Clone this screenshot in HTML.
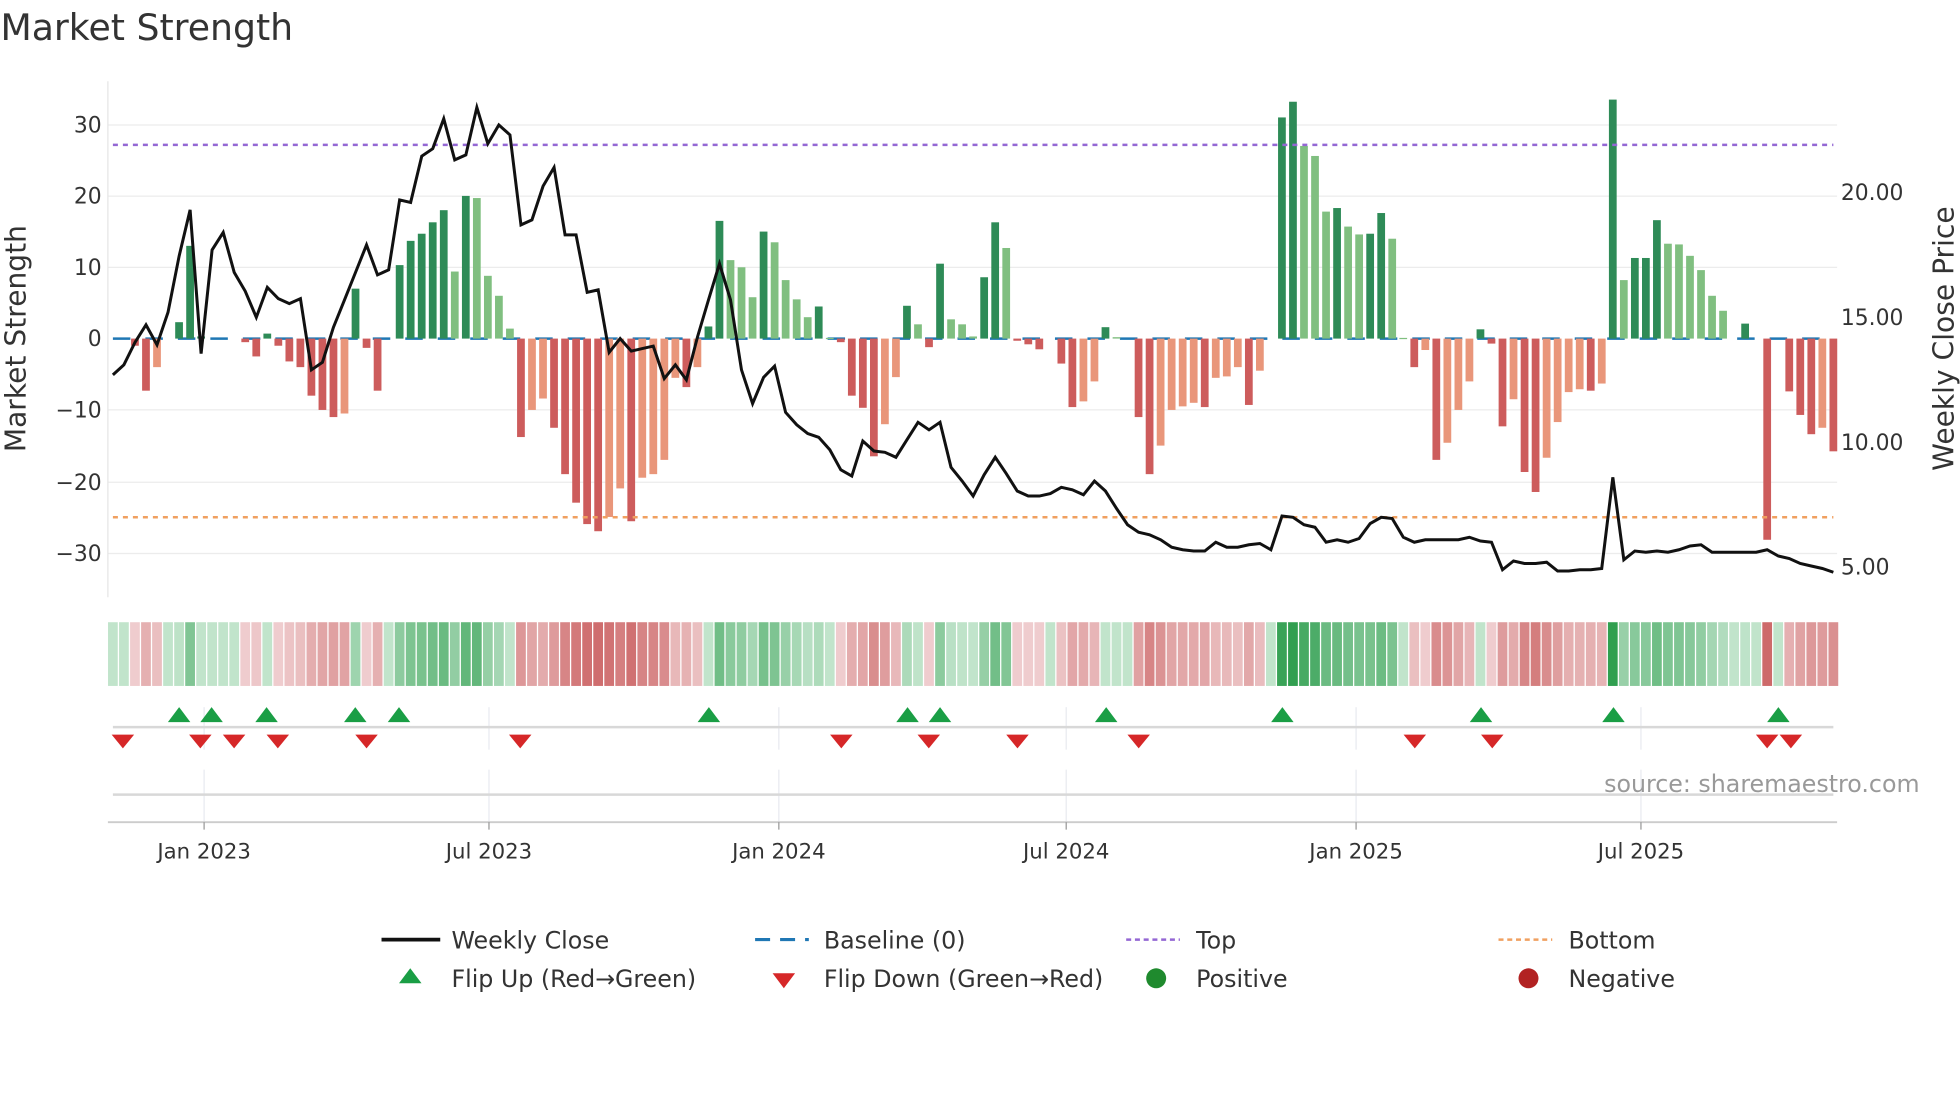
<!DOCTYPE html>
<html><head><meta charset="utf-8">
<style>
html,body{margin:0;padding:0;background:#fff;width:1960px;height:1102px;overflow:hidden}
svg{display:block}
text{font-family:"DejaVu Sans","Liberation Sans",sans-serif;fill:#333}
</style></head>
<body>
<svg id="s" width="1960" height="1102" viewBox="0 0 1568 882" xmlns="http://www.w3.org/2000/svg">
<text x="0" y="32" font-size="29">Market Strength</text>
<g id="grid" stroke="#ececec" stroke-width="1">
<line x1="86" x2="1470" y1="100" y2="100"/><line x1="86" x2="1470" y1="157" y2="157"/>
<line x1="86" x2="1470" y1="214" y2="214"/><line x1="86" x2="1470" y1="328" y2="328"/>
<line x1="86" x2="1470" y1="386" y2="386"/><line x1="86" x2="1470" y1="443" y2="443"/>
</g>
<line x1="86" x2="86" y1="65" y2="478" stroke="#e6e6e6"/>
<line x1="90" x2="1467" y1="271" y2="271" stroke="#1f77b4" stroke-width="2" stroke-dasharray="14 12"/>
<g id="bars"></g>
<line x1="90" x2="1467" y1="116" y2="116" stroke="#9467d4" stroke-width="2" stroke-dasharray="4 4"/>
<line x1="90" x2="1467" y1="414" y2="414" stroke="#f0a060" stroke-width="2" stroke-dasharray="4 4"/>
<polyline id="price" fill="none" stroke="#111" stroke-width="2.4" stroke-linejoin="miter"/>
<g font-size="17.5" text-anchor="end">
<text x="81" y="106">30</text><text x="81" y="163">20</text><text x="81" y="220">10</text>
<text x="81" y="277">0</text><text x="81" y="334">−10</text><text x="81" y="392">−20</text><text x="81" y="449">−30</text>
</g>
<g font-size="17.5">
<text x="1473" y="160">20.00</text><text x="1473" y="260">15.00</text>
<text x="1473" y="360">10.00</text><text x="1473" y="460">5.00</text>
</g>
<text transform="translate(20,271) rotate(-90)" font-size="22.5" text-anchor="middle">Market Strength</text>
<text transform="translate(1563,271) rotate(-90)" font-size="22.5" text-anchor="middle">Weekly Close Price</text>
<g id="heat"></g>
<g stroke="#e8eaf0" stroke-width="1">
<line x1="163" x2="163" y1="566" y2="600"/><line x1="391" x2="391" y1="566" y2="600"/>
<line x1="623" x2="623" y1="566" y2="600"/><line x1="853" x2="853" y1="566" y2="600"/>
<line x1="1085" x2="1085" y1="566" y2="600"/><line x1="1313" x2="1313" y1="566" y2="600"/>
<line x1="163" x2="163" y1="616" y2="658"/><line x1="391" x2="391" y1="616" y2="658"/>
<line x1="623" x2="623" y1="616" y2="658"/><line x1="853" x2="853" y1="616" y2="658"/>
<line x1="1085" x2="1085" y1="616" y2="658"/><line x1="1313" x2="1313" y1="616" y2="658"/>
</g>
<line x1="90" x2="1467" y1="582" y2="582" stroke="#d8d8d8" stroke-width="2"/>
<line x1="90" x2="1467" y1="636" y2="636" stroke="#d8d8d8" stroke-width="2"/>
<g id="marks"></g>
<text x="1536" y="634" font-size="19" text-anchor="end" style="fill:#999">source: sharemaestro.com</text>
<line x1="86" x2="1470" y1="658" y2="658" stroke="#ccc" stroke-width="1.5"/>
<g stroke="#999"><line x1="163" x2="163" y1="658" y2="664"/><line x1="391" x2="391" y1="658" y2="664"/><line x1="623" x2="623" y1="658" y2="664"/><line x1="853" x2="853" y1="658" y2="664"/><line x1="1085" x2="1085" y1="658" y2="664"/><line x1="1313" x2="1313" y1="658" y2="664"/></g>
<g font-size="17" text-anchor="middle">
<text x="163" y="687">Jan 2023</text><text x="391" y="687">Jul 2023</text><text x="623" y="687">Jan 2024</text>
<text x="853" y="687">Jul 2024</text><text x="1085" y="687">Jan 2025</text><text x="1313" y="687">Jul 2025</text>
</g>
<g font-size="19">
<line x1="305" x2="352" y1="752" y2="752" stroke="#111" stroke-width="3"/>
<text x="361" y="759">Weekly Close</text>
<line x1="604" x2="647" y1="752" y2="752" stroke="#1f77b4" stroke-width="2.5" stroke-dasharray="12 8"/>
<text x="659" y="759">Baseline (0)</text>
<line x1="901" x2="944" y1="752" y2="752" stroke="#9467d4" stroke-width="2" stroke-dasharray="4 3"/>
<text x="957" y="759">Top</text>
<line x1="1199" x2="1242" y1="752" y2="752" stroke="#f0a060" stroke-width="2" stroke-dasharray="4 3"/>
<text x="1255" y="759">Bottom</text>
<polygon points="328,775 337,787 319,787" fill="#1a9e45"/>
<text x="361" y="790">Flip Up (Red→Green)</text>
<polygon points="618,779 636,779 627,791" fill="#d62728"/>
<text x="659" y="790">Flip Down (Green→Red)</text>
<circle cx="925" cy="783" r="8" fill="#1f8a2e"/>
<text x="957" y="790">Positive</text>
<circle cx="1223" cy="783" r="8" fill="#b22222"/>
<text x="1255" y="790">Negative</text>
</g>
</svg>
<script>
var V="0 x,0 x,-1 R,-7.3 R,-4 O,0 x,2.3 G,13 G,0.3 G,0 x,0 x,0 x,-0.5 R,-2.5 R,0.7 G,-1 R,-3.2 R,-4 R,-8 R,-10 R,-11 R,-10.5 O,7 G,-1.3 R,-7.3 R,0 x,10.3 G,13.7 G,14.7 G,16.3 G,18 G,9.4 g,20 G,19.7 g,8.8 g,6 g,1.4 g,-13.8 R,-10 O,-8.4 O,-12.5 R,-19 R,-23 R,-26 R,-27 R,-25 O,-21 O,-25.6 R,-19.5 O,-19 O,-17 O,-5.5 O,-6.8 R,-4 O,1.7 G,16.5 G,11 g,10 g,5.8 g,15 G,13.5 g,8.2 g,5.5 g,3 g,4.5 G,0.1 g,-0.5 R,-8 R,-9.7 R,-16.5 R,-12 O,-5.4 O,4.6 G,2 g,-1.2 R,10.5 G,2.7 g,2 g,0.3 g,8.6 G,16.3 G,12.7 g,-0.3 R,-0.8 R,-1.5 R,0 x,-3.5 R,-9.6 R,-8.8 O,-6 O,1.6 G,0.2 g,0 x,-11 R,-19 R,-15 O,-10 O,-9.5 O,-9 O,-9.6 R,-5.5 O,-5.3 O,-4 O,-9.3 R,-4.5 O,0 x,31 G,33.2 G,27 g,25.6 g,17.8 g,18.3 G,15.7 g,14.6 g,14.7 G,17.6 G,14 g,0.1 g,-4 R,-1.6 O,-17 R,-14.6 O,-10 O,-6 O,1.3 G,-0.7 R,-12.3 R,-8.5 O,-18.7 R,-21.5 R,-16.7 O,-11.7 O,-7.5 O,-7.1 O,-7.3 R,-6.3 O,33.5 G,8.2 g,11.3 G,11.3 G,16.6 G,13.3 g,13.2 g,11.6 g,9.6 g,6 g,3.9 g,0 x,2.1 G,0 x,-28.2 R,0 x,-7.4 R,-10.7 R,-13.4 R,-12.5 O,-15.8 R".split(",");
var P=[300,292,274,260,276,250,205,168,283,200,186,218,233,254,230,239,243,239,296,290,262,240,218,196,220,216,160,162,125,119,95,128,124,86,115,100,108,180,176,149,134,188,188,234,232,282,271,281,279,277,303,292,304,270,240,211,240,296,323,302,293,330,340,347,350,360,376,381,353,361,362,366,352,338,344,338,374,385,397,380,366,379,393,397,397,395,390,392,396,385,393,407,420,426,428,432,438,440,441,441,434,438,438,436,435,440,413,414,420,422,434,432,434,431,419,414,415,430,434,432,432,432,432,430,433,434,456,449,451,451,450,457,457,456,456,455,382,448,441,442,441,442,440,437,436,442,442,442,442,442,440,445,447,451,453,455,458];
var C={G:"#2e8b57",g:"#80bf80",R:"#cd5c5c",O:"#e9967a"};
var NS="http://www.w3.org/2000/svg";
function el(n,a,p){var e=document.createElementNS(NS,n);for(var k in a)e.setAttribute(k,a[k]);p.appendChild(e);return e;}
var bars=document.getElementById("bars"),heat=document.getElementById("heat");
var n=V.length,x0=90,dx=(1467-90)/(n-1);
function mix(a,b,t){var r=[];for(var i=0;i<3;i++)r.push(Math.round(a[i]+(b[i]-a[i])*t));return "rgb("+r.join(",")+")";}
var pts=[];
for(var i=0;i<n;i++){
 var p=V[i].split(" "),v=parseFloat(p[0]),c=p[1],x=x0+i*dx;
 if(c!="x"&&Math.abs(v)>0.05){var h=Math.abs(v)*5.71;el("rect",{x:x-3.1,y:v>0?271-h:271,width:6.2,height:Math.max(h,1),fill:C[c]},bars);}
 var t=Math.min(Math.abs(v)/34,1),col;
 if(v>=0.05||c=="G"||c=="g"||c=="x"){t=Math.max(t,0.05);col=mix([214,238,221],[46,158,78],Math.pow(t,0.7));}
 else{t=Math.max(t,0.05);col=mix([244,220,222],[200,90,90],Math.pow(t,0.7));}
 el("rect",{x:x-3.9,y:498,width:7.8,height:51,fill:col},heat);
 if(i<P.length)pts.push(x.toFixed(1)+","+P[i]);
}
document.getElementById("price").setAttribute("points",pts.join(" "));
var mk=document.getElementById("marks");
[143,169,213,284,319,567,726,752,885,1026,1185,1291,1423].forEach(function(x){el("polygon",{points:(x)+",566 "+(x+9)+",578 "+(x-9)+",578",fill:"#1a9e45"},mk);});
[98,160,187,222,293,416,673,743,814,911,1132,1194,1414,1433].forEach(function(x){el("polygon",{points:(x-9)+",588 "+(x+9)+",588 "+x+",599",fill:"#d62728"},mk);});
</script>
</body></html>
